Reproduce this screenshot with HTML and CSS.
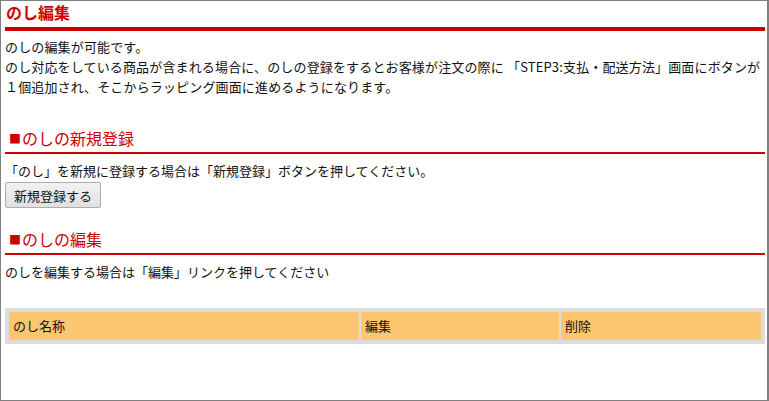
FILE: index.html
```html
<!DOCTYPE html>
<html lang="ja">
<head>
<meta charset="utf-8">
<title>のし編集</title>
<link rel="stylesheet" href="styles.css">
</head>
<body>
<div class="frame">
  <h1 class="page-title">のし編集</h1>
  <p class="intro">のしの編集が可能です。<br>のし対応をしている商品が含まれる場合に、のしの登録をするとお客様が注文の際に 「STEP3:支払・配送方法」画面にボタンが<br>１個追加され、そこからラッピング画面に進めるようになります。</p>

  <h2 class="section-title"><span class="mark">■</span>のしの新規登録</h2>
  <p class="note">「のし」を新規に登録する場合は「新規登録」ボタンを押してください。</p>
  <button class="btn" type="button">新規登録する</button>

  <h2 class="section-title second"><span class="mark">■</span>のしの編集</h2>
  <p class="note">のしを編集する場合は「編集」リンクを押してください</p>

  <table class="list">
    <colgroup><col class="c1"><col class="c2"><col class="c3"></colgroup>
    <thead>
      <tr><th>のし名称</th><th>編集</th><th>削除</th></tr>
    </thead>
  </table>
</div>
</body>
</html>
```
FILE: styles.css
```css
html, body {
  margin: 0;
  padding: 0;
  background: #ffffff;
}
body {
  font-family: "Noto Sans CJK JP", "Noto Sans", sans-serif;
  font-size: 13px;
  color: #111111;
}
.frame {
  box-sizing: border-box;
  width: 769px;
  height: 401px;
  border: 1px solid #808080;
  border-right-width: 2px;
  padding: 0 2px 0 4px;
}
.page-title {
  margin: 0;
  padding: 0 0 4px 1px;
  font-size: 16px;
  line-height: 22px;
  font-weight: bold;
  color: #cc0000;
  border-bottom: 4px solid #cc0000;
}
.intro {
  margin: 6px 0 0;
  line-height: 20px;
  white-space: nowrap;
  letter-spacing: 0.15px;
}
.section-title {
  margin: 30px 0 0;
  padding: 0 0 3px 4px;
  font-size: 16px;
  line-height: 22px;
  height: 22px;
  font-weight: normal;
  color: #cc0000;
  border-bottom: 2px solid #cc0000;
}
.section-title.second {
  margin-top: 20px;
}
.mark {
  font-size: 12px;
  line-height: 10px;
  margin-right: 1px;
  vertical-align: 1px;
}
.note {
  margin: 7px 0 0;
  line-height: 20px;
}
.btn {
  display: block;
  margin: 1px 0 0;
  box-sizing: border-box;
  width: 96px;
  height: 26px;
  padding: 0 6px;
  font-family: inherit;
  font-size: 13px;
  color: #111;
  background: linear-gradient(#f2f2f2, #e0e0e0);
  border: 1px solid #adadad;
  border-radius: 2px;
}
.list {
  margin-top: 26px;
  width: 760px;
  border-collapse: separate;
  border-spacing: 2px;
  border: 2px solid #dddddd;
  background: #dddddd;
  table-layout: fixed;
}
.list .c1 { width: 350px; }
.list .c2 { width: 198px; }
.list .c3 { width: 200px; }
.list th {
  height: 28px;
  padding: 0 4px;
  text-align: left;
  font-weight: normal;
  background: #fdc671;
  color: #111;
  line-height: 20px;
}
```
